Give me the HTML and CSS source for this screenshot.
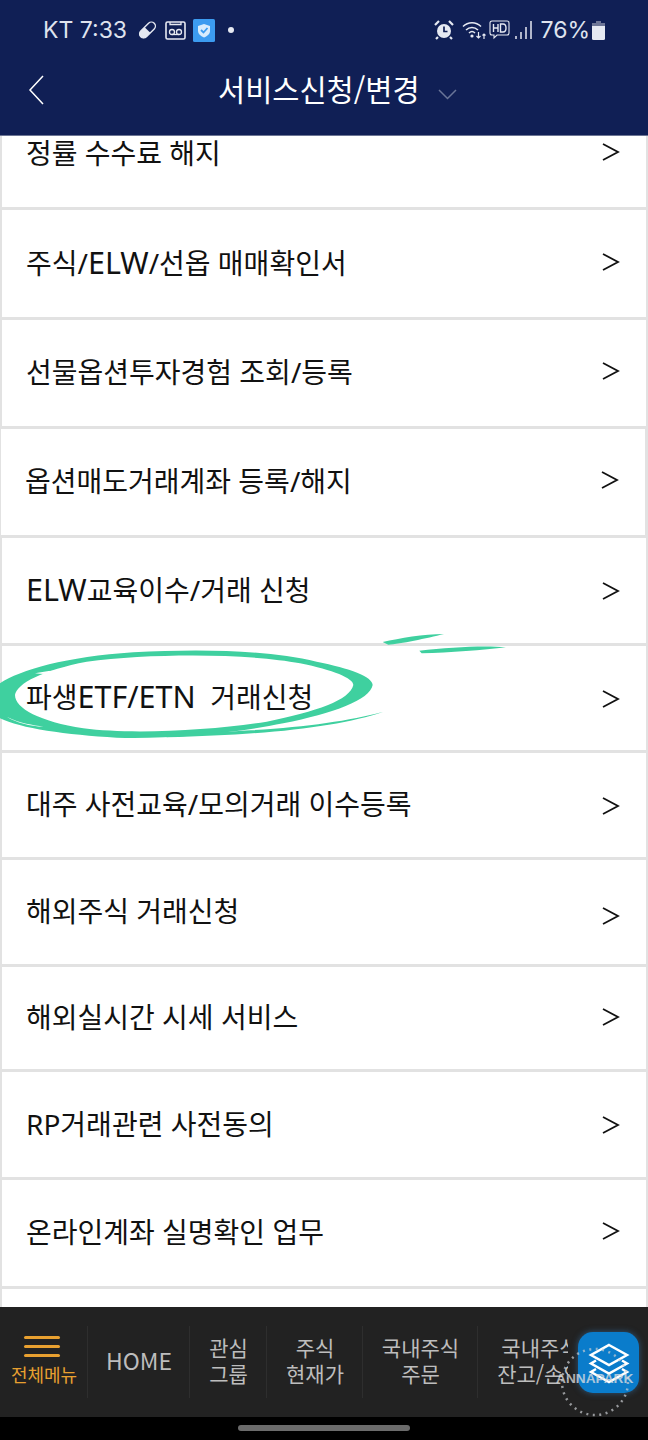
FILE: index.html
```html
<!DOCTYPE html>
<html lang="ko">
<head>
  <meta charset="UTF-8" />
  <meta name="viewport" content="width=device-width, initial-scale=1.0"/>
  <title>서비스신청/변경</title>
  <link rel="stylesheet" href="styles.css">
</head>
<body>

  <div class="phone">
    <div class="top">
      <div class="status">
        <div class="status-left">
          <span class="status-text">KT 7:33</span>
          <svg class="ico-pill" width="19" height="20" viewBox="0 0 19 20">
            <g transform="rotate(-45 9.5 10)">
              <rect x="0" y="6" width="19" height="8" rx="4" fill="none" stroke="#e6e9f2" stroke-width="1.4"/>
              <path d="M4 6h5.500v8H4a4 4 0 0 1 0-8z" fill="#e6e9f2"/>
            </g>
          </svg>
          <svg class="ico-tape" width="21" height="19" viewBox="0 0 21 19">
            <rect x="1" y="1" width="19" height="17" rx="1.500" fill="none" stroke="#e6e9f2" stroke-width="1.600"/>
            <path d="M5 1v2.500h11V1" fill="none" stroke="#e6e9f2" stroke-width="1.300"/>
            <circle cx="7" cy="11" r="2.500" fill="none" stroke="#e6e9f2" stroke-width="1.300"/>
            <circle cx="14" cy="11" r="2.500" fill="none" stroke="#e6e9f2" stroke-width="1.300"/>
            <path d="M7 13.500h7" stroke="#e6e9f2" stroke-width="1.300"/>
          </svg>
          <svg class="ico-shield" width="22" height="23" viewBox="0 0 22 23">
            <rect width="22" height="23" rx="1.500" fill="#3c9bf0"/>
            <path d="M11 5l6 2v5c0 3-2.500 5-6 6.500C7.500 17 5 15 5 12V7z" fill="#d8ecfd"/>
            <path d="M8 11l2.500 2.500L14.500 9" fill="none" stroke="#3c9bf0" stroke-width="1.800"/>
          </svg>
          <span class="status-dot"></span>
        </div>
        <div class="status-right">
          <svg class="ico-alarm" width="20" height="20" viewBox="0 0 20 20">
            <circle cx="10" cy="11" r="7" fill="#e6e9f2"/>
            <path d="M10 6.500V11.500H13.500" fill="none" stroke="#101f55" stroke-width="1.700"/>
            <path d="M1 5l4-4M19 5l-4-4M4 17l-2 2M16 17l2 2" stroke="#e6e9f2" stroke-width="2.200"/>
          </svg>
          <svg class="ico-wifi" width="25" height="20" viewBox="0 0 25 20">
            <path d="M1 6.500C6 1.500 14 1.500 19 6.500M4 10c3.500-3.500 8.500-3.500 12 0M7 13c2-2 4-2 6 0" fill="none" stroke="#e6e9f2" stroke-width="1.500"/>
            <circle cx="10" cy="16" r="1.600" fill="#e6e9f2"/>
            <path d="M16.500 12v6M14.500 16l2 2 2-2M22 19v-5M20.500 15.500l1.500-1.500 1.500 1.500" fill="none" stroke="#e6e9f2" stroke-width="1.200"/>
          </svg>
          <svg class="ico-hd" width="21" height="20" viewBox="0 0 21 20">
            <path d="M3 1h15a2 2 0 0 1 2 2v10a2 2 0 0 1-2 2H8l-3 3v-3H3a2 2 0 0 1-2-2V3a2 2 0 0 1 2-2z" fill="none" stroke="#e6e9f2" stroke-width="1.100"/>
            <path d="M4.500 4v8M9 4v8M4.500 8H9M11.500 4v8h2.500c2 0 3-1.500 3-4s-1-4-3-4z" fill="none" stroke="#e6e9f2" stroke-width="1.400"/>
          </svg>
          <svg class="ico-signal" width="17" height="20" viewBox="0 0 17 20">
            <path d="M1 16v3M6 12v7M11 7v12M16 1v18" stroke="#e6e9f2" stroke-width="1.500"/>
          </svg>
          <span class="status-text batt-text">76%</span>
          <svg class="ico-batt" width="13" height="19" viewBox="0 0 13 19">
            <path d="M4 0h5v2h4v4H0V2h4z" fill="#6d7596"/>
            <path d="M0 5h13v12.500a1.500 1.500 0 0 1-1.500 1.500h-10A1.500 1.500 0 0 1 0 17.500z" fill="#e6e9f2"/>
          </svg>
        </div>
      </div>
      <div class="title-bar">
        <svg class="back" width="16" height="30" viewBox="0 0 16 30">
          <path d="M15 1L2 15l13 14" fill="none" stroke="#fff" stroke-width="1.500"/>
        </svg>
        <h1>서비스신청/변경</h1>
        <svg class="caret" width="19" height="11" viewBox="0 0 19 11">
          <path d="M1 1l8.500 8.500L18 1" fill="none" stroke="#6a7598" stroke-width="1.500"/>
        </svg>
      </div>
    </div>

    <div class="list-wrap">
      <ul class="list">
        <li class="row"><span>정률 수수료 해지</span><svg class="arrow" viewBox="0 0 18 18"><path d="M1 1l15 8-15 8" /></svg></li>
        <li class="row"><span>주식/<span class="en">ELW</span>/선옵 매매확인서</span><svg class="arrow" viewBox="0 0 18 18"><path d="M1 1l15 8-15 8" /></svg></li>
        <li class="row"><span>선물옵션투자경험 조회/등록</span><svg class="arrow" viewBox="0 0 18 18"><path d="M1 1l15 8-15 8" /></svg></li>
        <li class="row"><span>옵션매도거래계좌 등록/해지</span><svg class="arrow" viewBox="0 0 18 18"><path d="M1 1l15 8-15 8" /></svg></li>
        <li class="row"><span><span class="en">ELW</span>교육이수/거래 신청</span><svg class="arrow" viewBox="0 0 18 18"><path d="M1 1l15 8-15 8" /></svg></li>
        <li class="row">
          <svg class="mark" width="520" height="140" viewBox="0 0 1560 420">
            <path fill="#3fd09f" fill-rule="evenodd" d="M0 190C60 150 200 110 400 97C600 85 800 90 950 125C1050 145 1118 170 1118 195C1110 240 1000 280 850 310C700 340 500 358 350 353C200 345 60 325 0 295ZM45 225C50 190 130 150 260 125C450 100 750 100 900 130C1000 150 1060 175 1060 195C1050 240 950 275 800 305C650 330 400 345 250 325C120 305 45 265 45 225Z"/>
            <path fill="#3fd09f" d="M500 340C800 335 1000 315 1150 275C1020 320 800 345 500 352ZM1148 66C1200 55 1270 42 1332 42C1280 55 1200 72 1165 74ZM1258 92C1350 82 1450 76 1518 82C1450 90 1350 98 1265 100Z"/>
            <path fill="#fff" d="M105 160C140 152 180 150 212 150C180 160 140 165 105 160ZM20 290C60 310 100 315 130 320C90 318 50 308 20 290Z"/>
          </svg>
          <span class="row-label">파생<span class="en">ETF/ETN</span>&nbsp; 거래신청</span><svg class="arrow" viewBox="0 0 18 18"><path d="M1 1l15 8-15 8" /></svg>
        </li>
        <li class="row"><span>대주 사전교육/모의거래 이수등록</span><svg class="arrow" viewBox="0 0 18 18"><path d="M1 1l15 8-15 8" /></svg></li>
        <li class="row"><span>해외주식 거래신청</span><svg class="arrow" viewBox="0 0 18 18"><path d="M1 1l15 8-15 8" /></svg></li>
        <li class="row"><span>해외실시간 시세 서비스</span><svg class="arrow" viewBox="0 0 18 18"><path d="M1 1l15 8-15 8" /></svg></li>
        <li class="row"><span>RP거래관련 사전동의</span><svg class="arrow" viewBox="0 0 18 18"><path d="M1 1l15 8-15 8" /></svg></li>
        <li class="row"><span>온라인계좌 실명확인 업무</span><svg class="arrow" viewBox="0 0 18 18"><path d="M1 1l15 8-15 8" /></svg></li>
        <li class="row"></li>
      </ul>
    </div>

    <div class="tabs">
      <div class="tab tab-menu">
        <span class="burger"><i></i><i></i><i></i></span>
        <span>전체메뉴</span>
      </div>
      <div class="tab tab-home">HOME</div>
      <div class="tab tab-group">관심<br>그룹</div>
      <div class="tab tab-price">주식<br>현재가</div>
      <div class="tab tab-order">국내주식<br>주문</div>
      <div class="tab tab-last"><span class="tab-inner">국내주식<br>잔고/손익</span></div>
    </div>

    <div class="gesture"><span class="pill"></span></div>

    <!-- 떠있는 버튼 -->
    <svg class="dots" width="80" height="80" viewBox="0 0 80 80">
      <circle cx="40" cy="40" r="33" fill="none" stroke="#c9ccd0" stroke-width="2.500" stroke-dasharray="2 4.500" opacity="0.7"/>
    </svg>
    <div class="float-btn">
      <svg width="42" height="42" viewBox="0 0 42 42">
        <path d="M21 3L39 13 21 23 3 13Z" fill="none" stroke="#fff" stroke-width="2.500"/>
        <path d="M8 18.500L3 21.500 21 31.500 39 21.500 34 18.500" fill="none" stroke="#fff" stroke-width="2.500"/>
        <path d="M8 27L3 30 21 40 39 30 34 27" fill="none" stroke="#fff" stroke-width="2.500"/>
      </svg>
    </div>
    <span class="float-label">ANNAPARK</span>
  </div>

</body>
</html>
```

FILE: styles.css
```css
* {
  box-sizing: border-box;
}
body {
  margin: 0;
  background-color: #000;
  font-family: "Noto Sans CJK KR", "Noto Sans", sans-serif;
}
.phone {
  position: relative;
  width: 648px;
  height: 1440px;
  display: flex;
  flex-direction: column;
  overflow: hidden;
  background-color: #fff;
}

/* top */
.top {
  flex: none;
  height: 136px;
  background-color: #101f55;
  border-bottom: 1px solid #6c7594;
}
.status {
  height: 60px;
  display: flex;
  justify-content: space-between;
  align-items: center;
  padding: 0 43px;
}
.status-left, .status-right {
  display: flex;
  align-items: center;
}
.status-text {
  font-family: Inter, Roboto, sans-serif;
  font-size: 23px;
  color: #dfe3ee;
}
.ico-pill {
  margin-left: 11px;
}
.ico-tape {
  margin-left: 8px;
}
.ico-shield {
  margin-left: 7px;
}
.status-dot {
  width: 6px;
  height: 6px;
  border-radius: 50%;
  margin-left: 13px;
  background-color: #e6e9f2;
}
.ico-wifi {
  margin-left: 8px;
}
.ico-hd {
  margin-left: 2px;
}
.ico-signal {
  margin-left: 5px;
}
.batt-text {
  margin-left: 8px;
}
.ico-batt {
  margin-left: 2px;
}
.title-bar {
  height: 60px;
  display: flex;
  align-items: center;
  padding-left: 28px;
}
.back {
  flex: none;
}
.title-bar h1 {
  margin: 0 0 4px 174px;
  font-size: 29.5px;
  font-weight: 400;
  line-height: 56px;
  color: #fff;
  white-space: nowrap;
}
.caret {
  margin: 8px 0 0 18px;
}

/* list */
.list-wrap {
  flex: 1;
  overflow: hidden;
  min-height: 0;
  background-color: #e2e2e2;
}
.list {
  list-style: none;
  margin: -40px 0 0;
  padding: 0 2px;
}
.row {
  position: relative;
  display: flex;
  justify-content: space-between;
  align-items: center;
  height: 110px;
  margin-bottom: 3px;
  padding: 0 26px 4px 24px;
  background-color: #fff;
  font-family: "Noto Sans", "Noto Sans CJK KR", sans-serif;
  font-size: 28px;
  color: #111;
  white-space: nowrap;
}
.row:nth-child(1) { height: 111px; padding-bottom: 0; }
.row:nth-child(2) { height: 107px; }
.row:nth-child(3) { height: 106px; }
.row:nth-child(4) { height: 106px; margin: 0 1px 3px -1px; }
.row:nth-child(5) { height: 105px; }
.row:nth-child(6) { height: 104px; }
.row:nth-child(7) { height: 104px; }
.row:nth-child(8) { height: 104px; }
.row:nth-child(9) { height: 102px; }
.row:nth-child(10) { height: 105px; }
.row:nth-child(11) { height: 106px; }
.en {
  font-size: 30.5px;
  line-height: 1;
}
.arrow {
  flex: none;
  width: 18px;
  height: 18px;
  fill: none;
  stroke: #111;
  stroke-width: 1.800;
}
.row:nth-child(5) .arrow { margin-top: 4px; }
.row:nth-child(6) .arrow { margin-top: 6px; }
.row:nth-child(7) .arrow { margin-top: 6px; }
.row:nth-child(8) .arrow { margin-top: 12px; }
.row:nth-child(9) .arrow { margin-top: 2px; }
.row:nth-child(10) .arrow { margin-top: 4px; }
.mark {
  position: absolute;
  left: -2px;
  top: -26px;
}
.row-label {
  position: relative;
}

/* bottom */
.tabs {
  flex: none;
  height: 110px;
  display: flex;
  background-color: #222;
  color: #bdbdbd;
  font-size: 21px;
  line-height: 26px;
  text-align: center;
}
.tab {
  position: relative;
  display: flex;
  align-items: center;
  justify-content: center;
  padding-bottom: 4px;
}
.tab::after {
  content: "";
  position: absolute;
  top: 19px;
  right: 0;
  width: 1px;
  height: 72px;
  background-color: #2e2e2e;
}
.tab-menu {
  width: 88px;
  flex-direction: column;
  color: #e8a030;
  font-size: 18px;
  line-height: 24px;
  padding: 0 0 2px;
}
.burger {
  display: flex;
  flex-direction: column;
  gap: 6px;
  margin: 0 4px 5px 0;
}
.burger i {
  display: block;
  width: 36px;
  height: 3px;
  border-radius: 2px;
  background-color: #e8a030;
}
.tab-home {
  width: 102px;
  font-size: 23px;
}
.tab-group { width: 77px; }
.tab-price { width: 96px; }
.tab-order { width: 115px; }
.tab-last {
  width: 90px;
  justify-content: flex-start;
  overflow: hidden;
}
.tab-last::after {
  display: none;
}
.tab-inner {
  flex: none;
  width: 124px;
}
.gesture {
  flex: none;
  height: 23px;
  background-color: #000;
  display: flex;
  justify-content: center;
  padding-top: 8px;
}
.pill {
  width: 172px;
  height: 6px;
  border-radius: 3px;
  background-color: #6b6b6b;
}

/* floating button */
.float-btn {
  position: absolute;
  left: 578px;
  top: 1332px;
  width: 61px;
  height: 61px;
  display: flex;
  align-items: center;
  justify-content: center;
  border-radius: 15px;
  background-color: #0a7ccb;
  box-shadow: 0 0 6px rgba(60, 140, 210, 0.5);
}
.dots {
  position: absolute;
  left: 555px;
  top: 1342px;
  z-index: 1;
}
.float-label {
  position: absolute;
  left: 556px;
  top: 1370px;
  z-index: 2;
  font-family: "Liberation Sans", sans-serif;
  font-size: 13.700px;
  line-height: 18px;
  font-weight: 700;
  color: rgba(225, 225, 225, 0.75);
}
```
